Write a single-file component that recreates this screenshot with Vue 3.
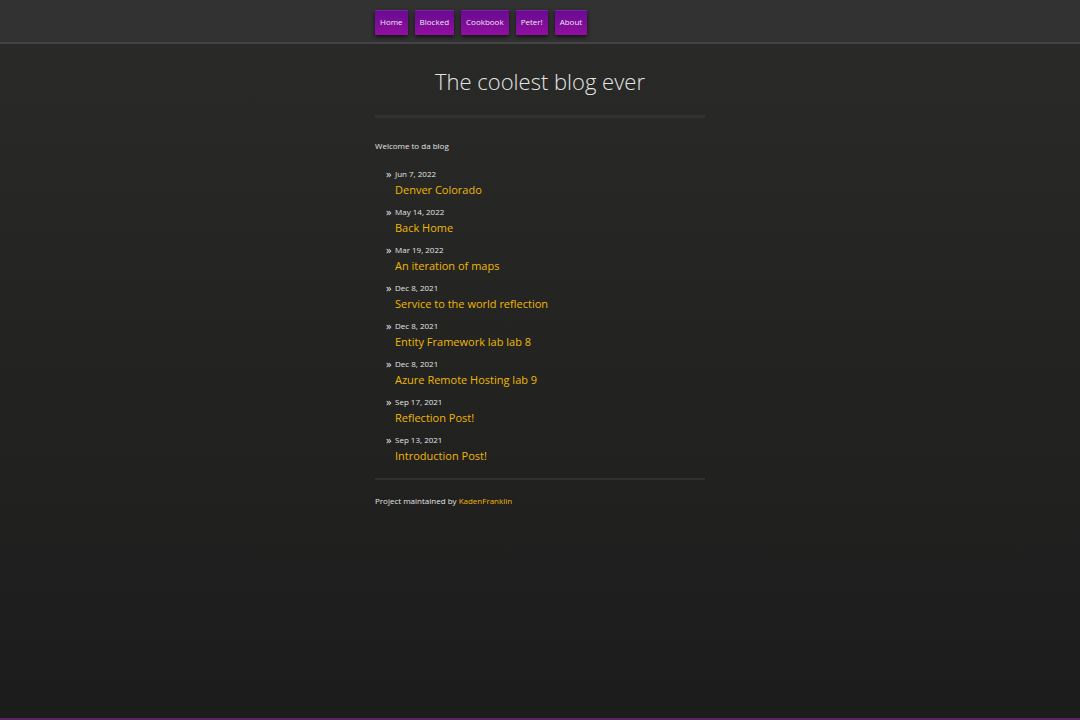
<script setup>
const nav = ['Home', 'Blocked', 'Cookbook', 'Peter!', 'About']
const posts = [
  ['Jun 7, 2022', 'Denver Colorado'],
  ['May 14, 2022', 'Back Home'],
  ['Mar 19, 2022', 'An iteration of maps'],
  ['Dec 8, 2021', 'Service to the world reflection'],
  ['Dec 8, 2021', 'Entity Framework lab lab 8'],
  ['Dec 8, 2021', 'Azure Remote Hosting lab 9'],
  ['Sep 17, 2021', 'Reflection Post!'],
  ['Sep 13, 2021', 'Introduction Post!'],
]
</script>

<template>
  <div class="page">
    <header class="bar">
      <nav class="inner nav">
        <a v-for="n in nav" :key="n" href="#" class="button">{{ n }}</a>
      </nav>
    </header>
    <main class="inner">
      <h1>The coolest blog ever</h1>
      <p class="welcome">Welcome to da blog</p>
      <ul class="posts">
        <li v-for="p in posts" :key="p[1]">
          <span class="date">{{ p[0] }}</span>
          <a href="#">{{ p[1] }}</a>
        </li>
      </ul>
      <footer>Project maintained by <a href="#">KadenFranklin</a></footer>
    </main>
  </div>
</template>

<style>
body {
  margin: 0;
}
</style>

<style scoped>
.page {
  box-sizing: border-box;
  min-height: 100vh;
  border-bottom: 2px solid #5c2465;
  background: linear-gradient(#2a2a28, #1c1c1c);
  color: #e4e4e4;
  font: 8px/16px "Open Sans", sans-serif;
}
.bar {
  background: #323232;
  border-bottom: 2px solid #434343;
  padding: 10px 0 7px;
}
.inner {
  width: 330px;
  max-width: 90%;
  margin: 0 auto;
}
.nav {
  display: flex;
  gap: 7px;
}
.button {
  padding: 0 5px 2px;
  line-height: 22px;
  color: #f2e4f5;
  border-top: 1px solid #7d24a4;
  border-radius: 1px;
  background: linear-gradient(#680b90, #920fa0);
  box-shadow: 0 2px 4px #111;
}
a {
  color: #f0b800;
  text-decoration: none;
}
h1 {
  margin: 0;
  padding: 17px 0 14px;
  border-bottom: 3px solid #323232;
  font-size: 22px;
  line-height: 40px;
  font-weight: 300;
  text-align: center;
}
.welcome {
  margin: 20px 0 12px;
}
.posts {
  list-style: none;
  margin: 0;
  padding: 0 0 8px 20px;
  border-bottom: 2px solid #313131;
}
.posts li {
  position: relative;
  margin-bottom: 6px;
}
.posts li::before {
  content: "»";
  position: absolute;
  left: -9px;
  font-size: 11px;
}
.posts a {
  display: block;
  font-size: 11px;
}
.date {
  display: block;
}
footer {
  padding-top: 13px;
}
</style>
